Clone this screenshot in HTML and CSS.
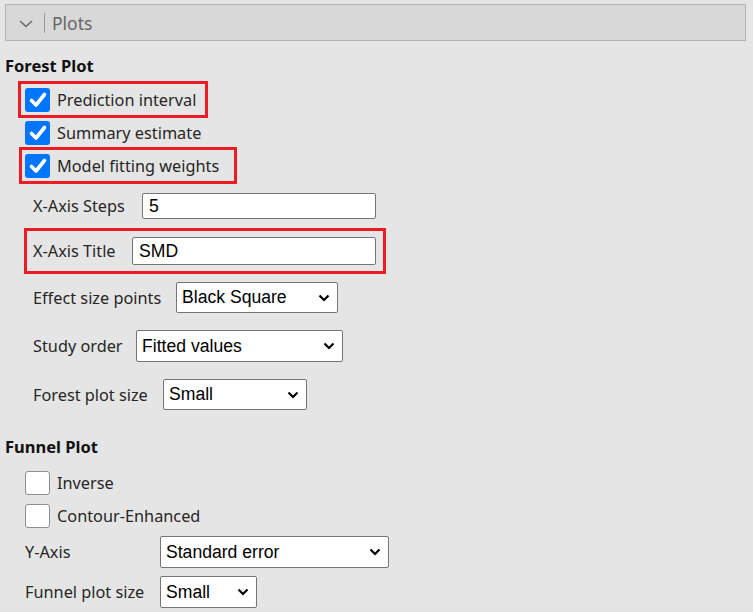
FILE: index.html
```html
<!DOCTYPE html>
<html>
<head>
<meta charset="utf-8">
<link rel="stylesheet" href="styles.css">
</head>
<body>
<div class="panel-header">
  <svg class="chev" width="14" height="10" viewBox="0 0 14 10"><path d="M1 2 L7 7.5 L13 2" fill="none" stroke="#666" stroke-width="1.4"/></svg>
  <span class="sep"></span>
  <span class="panel-title">Plots</span>
</div>

<div class="section-title">Forest Plot</div>

<div class="hl hl-1">
  <label class="check-row"><span class="cb on"><svg width="24" height="24" viewBox="0 0 24 24"><path d="M5.5 12.5 L10 17 L18.5 6.5" fill="none" stroke="#fff" stroke-width="3.6" stroke-linecap="round" stroke-linejoin="round"/></svg></span><span class="lbl">Prediction interval</span></label>
</div>
<div class="plain-check">
  <label class="check-row"><span class="cb on"><svg width="24" height="24" viewBox="0 0 24 24"><path d="M5.5 12.5 L10 17 L18.5 6.5" fill="none" stroke="#fff" stroke-width="3.6" stroke-linecap="round" stroke-linejoin="round"/></svg></span><span class="lbl">Summary estimate</span></label>
</div>
<div class="hl hl-2">
  <label class="check-row"><span class="cb on"><svg width="24" height="24" viewBox="0 0 24 24"><path d="M5.5 12.5 L10 17 L18.5 6.5" fill="none" stroke="#fff" stroke-width="3.6" stroke-linecap="round" stroke-linejoin="round"/></svg></span><span class="lbl">Model fitting weights</span></label>
</div>

<div class="field steps-row">
  <span class="lbl l-steps">X-Axis Steps</span>
  <span class="input w-steps">5</span>
</div>

<div class="hl hl-3">
  <div class="field inner">
    <span class="lbl l-title">X-Axis Title</span>
    <span class="input w-title">SMD</span>
  </div>
</div>

<div class="field sel-row r-effect">
  <span class="lbl l-effect">Effect size points</span>
  <span class="select w-effect">Black Square<svg class="arrow" width="12" height="8" viewBox="0 0 12 8"><path d="M1.5 1.5 L6 6 L10.5 1.5" fill="none" stroke="#000" stroke-width="2.2"/></svg></span>
</div>
<div class="field sel-row r-order">
  <span class="lbl l-order">Study order</span>
  <span class="select w-order">Fitted values<svg class="arrow" width="12" height="8" viewBox="0 0 12 8"><path d="M1.5 1.5 L6 6 L10.5 1.5" fill="none" stroke="#000" stroke-width="2.2"/></svg></span>
</div>
<div class="field sel-row r-fsize">
  <span class="lbl l-fsize">Forest plot size</span>
  <span class="select w-fsize">Small<svg class="arrow" width="12" height="8" viewBox="0 0 12 8"><path d="M1.5 1.5 L6 6 L10.5 1.5" fill="none" stroke="#000" stroke-width="2.2"/></svg></span>
</div>

<div class="section-title funnel-title">Funnel Plot</div>

<div class="plain-check funnel-check first">
  <label class="check-row"><span class="cb"></span><span class="lbl">Inverse</span></label>
</div>
<div class="plain-check funnel-check">
  <label class="check-row"><span class="cb"></span><span class="lbl">Contour-Enhanced</span></label>
</div>

<div class="field sel-row funnel-row r-yaxis">
  <span class="lbl l-funnel">Y-Axis</span>
  <span class="select w-yaxis">Standard error<svg class="arrow" width="12" height="8" viewBox="0 0 12 8"><path d="M1.5 1.5 L6 6 L10.5 1.5" fill="none" stroke="#000" stroke-width="2.2"/></svg></span>
</div>
<div class="field sel-row funnel-row r-usize">
  <span class="lbl l-funnel">Funnel plot size</span>
  <span class="select w-usize">Small<svg class="arrow" width="12" height="8" viewBox="0 0 12 8"><path d="M1.5 1.5 L6 6 L10.5 1.5" fill="none" stroke="#000" stroke-width="2.2"/></svg></span>
</div>
</body>
</html>
```

FILE: styles.css
```css
html, body {
  margin: 0;
  padding: 0;
  background: #e5e5e5;
  height: 612px;
  overflow: hidden;
}
body {
  font-family: "Noto Sans", "Open Sans", sans-serif;
  font-size: 16.3px;
  color: #262626;
}
.panel-header {
  margin: 4px 7px 0 5px;
  height: 37px;
  box-sizing: border-box;
  border: 1px solid #b3b3b3;
  background: #d8d8d8;
  display: flex;
  align-items: center;
}
.chev {
  margin-left: 13px;
  margin-top: 2px;
}
.sep {
  width: 1px;
  height: 20px;
  background: #9a9a9a;
  margin-left: 11px;
}
.panel-title {
  margin-left: 7px;
  color: #666;
  font-size: 17.5px;
}
.section-title {
  margin: 14px 0 0 5px;
  height: 22px;
  line-height: 22px;
  font-weight: 700;
  font-size: 16.5px;
  color: #111;
}
.hl {
  border: 3px solid #ed1c24;
  box-sizing: border-box;
  display: flex;
  align-items: center;
}
.hl-1 {
  margin: 4px 0 0 18px;
  width: 190px;
  height: 37px;
  padding-left: 4px;
}
.hl-2 {
  margin: 0 0 0 19px;
  width: 218px;
  height: 37px;
  padding-left: 3px;
}
.hl-3 {
  margin: 0 0 0 24px;
  width: 362px;
  height: 46px;
  padding-left: 6px;
}
.plain-check {
  height: 29px;
  display: flex;
  align-items: center;
  padding-left: 25px;
}
.check-row {
  display: flex;
  align-items: center;
}
.cb {
  width: 25px;
  height: 24px;
  box-sizing: border-box;
  border-radius: 3px;
  border: 1px solid #8f8f8f;
  background: #fff;
  display: flex;
  align-items: center;
  justify-content: center;
}
.cb.on {
  border: none;
  background: #0075ff;
}
.check-row .lbl {
  margin-left: 7px;
}
.field {
  display: flex;
  align-items: center;
}
.field .lbl {
  flex: none;
}
.l-steps { width: 109px; }
.l-title { width: 99px; }
.l-effect { width: 143px; }
.l-order { width: 103px; }
.l-fsize { width: 130px; }
.l-funnel { width: 135px; }
.steps-row {
  height: 44px;
  padding-left: 33px;
}
.inner {
  height: 40px;
}
.input {
  box-sizing: border-box;
  background: #fff;
  border: 1px solid #767676;
  border-radius: 2px;
  font-family: "Liberation Sans", Arial, sans-serif;
  font-size: 17.6px;
  color: #000;
  padding-left: 6px;
  display: flex;
  align-items: center;
}
.w-steps {
  width: 234px;
  height: 26px;
}
.w-title {
  width: 244px;
  height: 28px;
}
.sel-row {
  padding-left: 33px;
}
.select {
  box-sizing: border-box;
  background: #fff;
  border: 1px solid #767676;
  border-radius: 2px;
  font-family: "Liberation Sans", Arial, sans-serif;
  font-size: 17.6px;
  color: #000;
  padding-left: 5px;
  display: flex;
  align-items: center;
  justify-content: space-between;
  height: 31px;
}
.select .arrow {
  margin-right: 7px;
}
.r-effect { margin-top: 8px; }
.r-order { margin-top: 17px; }
.r-fsize { margin-top: 17px; }
.w-effect { width: 162px; }
.w-order { width: 207px; height: 32px; }
.w-fsize { width: 144px; }
.funnel-title { margin-top: 26px; }
.funnel-check { height: 33px; }
.funnel-check.first { margin-top: 8px; }
.funnel-row { padding-left: 25px; }
.r-yaxis { margin-top: 4px; }
.r-usize { margin-top: 8px; }
.w-yaxis { width: 229px; height: 32px; }
.w-usize { width: 97px; height: 32px; }
```
